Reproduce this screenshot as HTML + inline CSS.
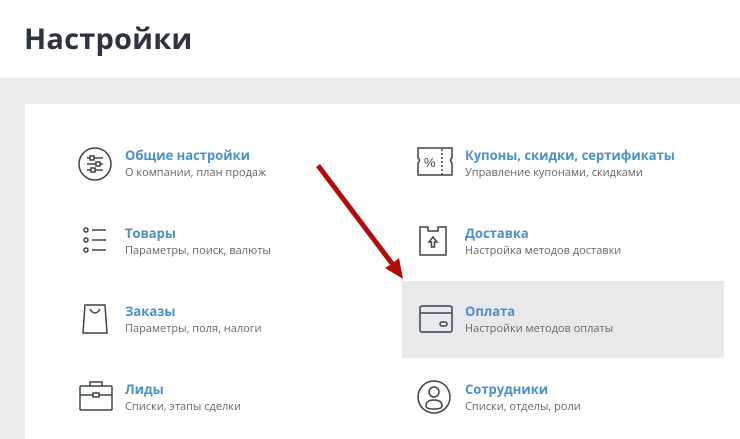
<!DOCTYPE html>
<html><head><meta charset="utf-8"><style>
body{margin:0;width:740px;height:439px;overflow:hidden;background:#ebebeb;font-family:"Open Sans","Liberation Sans","DejaVu Sans",sans-serif;position:relative}
.hdr{position:absolute;left:0;top:0;width:740px;height:78px;background:#fff}
.hdr h1{margin:0;position:absolute;left:24px;top:19px;font-size:29px;font-weight:bold;color:#2b3440;letter-spacing:0.2px}
.card{position:absolute;left:25px;top:104px;width:715px;height:335px;background:#fff}
.hl{position:absolute;left:402px;top:281px;width:322px;height:77px;background:#e8e9eb}
.it{position:absolute}
.it svg{position:absolute;left:-48px;top:-8px}
.t{position:absolute;left:0;top:-9px;font-size:13px;font-weight:bold;color:#4a90d0;white-space:nowrap}
.s{position:absolute;left:0;top:10px;font-size:11px;color:#666;white-space:nowrap}
</style></head><body>
<div class="hdr"><h1>Настройки</h1></div>
<div class="card"></div>
<div class="hl"></div>

<div class="it" style="left:125px;top:155px">
<svg width="36" height="36" viewBox="0 0 36 36" style="left:-48px;top:-9px" fill="none" stroke="#3d434b" stroke-width="1.5"><circle cx="18" cy="18" r="16"/><path d="M10 12h16M10 18h16M10 24h16"/><rect x="13" y="10" width="4" height="4" fill="#fff"/><rect x="19" y="16" width="4" height="4" fill="#fff"/><rect x="14" y="22" width="4" height="4" fill="#fff"/></svg>
<div class="t">Общие настройки</div><div class="s">О компании, план продаж</div></div>

<div class="it" style="left:125px;top:233px">
<svg width="36" height="36" viewBox="0 0 36 36" style="left:-48px;top:-10px" fill="none" stroke="#3d434b" stroke-width="1.5"><circle cx="9" cy="7" r="2"/><circle cx="9" cy="17" r="2"/><circle cx="9" cy="27" r="2"/><path d="M15 7h14M15 17h14M15 27h14"/></svg>
<div class="t">Товары</div><div class="s">Параметры, поиск, валюты</div></div>

<div class="it" style="left:125px;top:311px">
<svg width="36" height="36" viewBox="0 0 36 36" style="left:-48px;top:-10px" fill="none" stroke="#3d434b" stroke-width="1.5"><path d="M8 4h20l2 28H6z"/><path d="M13 8q5 8 10 0"/></svg>
<div class="t">Заказы</div><div class="s">Параметры, поля, налоги</div></div>

<div class="it" style="left:125px;top:389px">
<svg width="36" height="36" viewBox="0 0 36 36" style="left:-48px;top:-11px" fill="none" stroke="#3d434b" stroke-width="1.5"><rect x="3" y="8" width="32" height="24" rx="1"/><path d="M13 8V4h12v4M3 17h32"/><rect x="16" y="15" width="6" height="4" fill="#fff"/></svg>
<div class="t">Лиды</div><div class="s">Списки, этапы сделки</div></div>

<div class="it" style="left:465px;top:155px">
<svg width="40" height="36" viewBox="0 0 40 36" style="left:-49px;top:-10px" fill="none" stroke="#3d434b" stroke-width="1.5"><path d="M2 3h34v10q-3 2 0 5v12H2V18q3-3 0-5z"/><path d="M26 4v26" stroke-dasharray="2 2"/><text x="8" y="22" font-size="13" fill="#3d434b" stroke="none" font-family="Liberation Sans">%</text></svg>
<div class="t">Купоны, скидки, сертификаты</div><div class="s">Управление купонами, скидками</div></div>

<div class="it" style="left:465px;top:233px">
<svg width="36" height="36" viewBox="0 0 36 36" style="left:-48px;top:-10px" fill="none" stroke="#3d434b" stroke-width="1.5"><path d="M3 4h8v4h10V4h8v28H3z"/><path d="M16 14l-4 5h2.5v5h3v-5H20z"/></svg>
<div class="t">Доставка</div><div class="s">Настройка методов доставки</div></div>

<div class="it" style="left:465px;top:311px">
<svg width="36" height="36" viewBox="0 0 36 36" style="left:-48px;top:-10px" fill="none" stroke="#3d434b" stroke-width="1.5"><rect x="3" y="5" width="32" height="26" rx="2"/><path d="M3 12h32"/><rect x="23" y="21" width="7" height="4" rx="2"/></svg>
<div class="t">Оплата</div><div class="s">Настройки методов оплаты</div></div>

<div class="it" style="left:465px;top:389px">
<svg width="36" height="36" viewBox="0 0 36 36" style="left:-49px;top:-10px" fill="none" stroke="#3d434b" stroke-width="1.5"><circle cx="18" cy="18" r="16"/><circle cx="18" cy="13" r="5"/><path d="M10 27q0-6 8-6t8 6q0 3-8 3t-8-3z"/></svg>
<div class="t">Сотрудники</div><div class="s">Списки, отделы, роли</div></div>

<svg style="position:absolute;left:0;top:0" width="740" height="439"><path d="M316 167L320 164L394 262L399 258L403 279L385 268L390 265Z" fill="#b10b0b"/></svg>
</body></html>
